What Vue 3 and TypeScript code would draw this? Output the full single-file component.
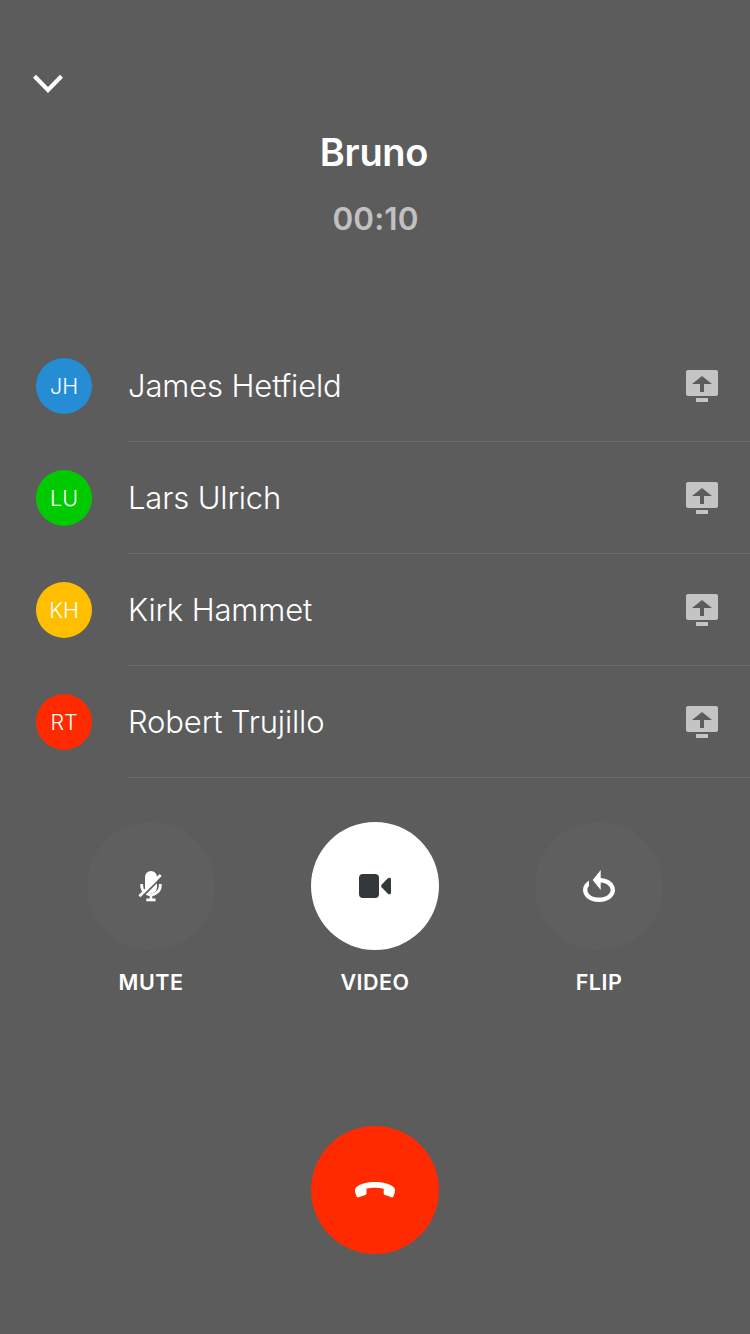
<script setup lang="ts">
interface Participant {
  name: string
  initials: string
  tone: string
}

const participants: Participant[] = [
  { name: 'James Hetfield', initials: 'JH', tone: 'blue' },
  { name: 'Lars Ulrich', initials: 'LU', tone: 'green' },
  { name: 'Kirk Hammet', initials: 'KH', tone: 'yellow' },
  { name: 'Robert Trujillo', initials: 'RT', tone: 'red' },
]
</script>

<template>
  <main class="call">
    <button class="collapse" aria-label="Minimize">
      <svg width="32" height="24" viewBox="0 0 32 24">
        <path d="M2.500 4.300 16 17.900 29.500 4.300" fill="none" stroke="#fff" stroke-width="4.200" />
      </svg>
    </button>
    <h1 class="title">Bruno</h1>
    <p class="timer">00:10</p>

    <ul class="people">
      <li v-for="p in participants" :key="p.initials" class="person">
        <span class="avatar" :class="p.tone">{{ p.initials }}</span>
        <div class="details">
          <span class="name">{{ p.name }}</span>
          <svg class="share" width="32" height="32" viewBox="0 0 32 32">
            <path
              fill="#c4c4c4"
              fill-rule="evenodd"
              d="M2 0H30Q32 0 32 2V24Q32 26 30 26H2Q0 26 0 24V2Q0 0 2 0ZM16 6 6 14H14V22H18V14H26ZM10 28H22V32H10Z"
            />
          </svg>
        </div>
      </li>
    </ul>

    <section class="controls">
      <div class="control">
        <button class="round" aria-label="Mute">
          <svg width="128" height="128" viewBox="0 0 128 128">
            <rect x="58" y="49" width="12" height="22.500" rx="6" fill="#fff" />
            <path d="M54.700 62v1.500a9.300 9.300 0 0 0 18.600 0V62" fill="none" stroke="#fff" stroke-width="2.800" />
            <path d="M64 72v5" fill="none" stroke="#fff" stroke-width="2.600" />
            <path d="M59.300 77.900h9.200" fill="none" stroke="#fff" stroke-width="2.800" />
            <path d="M53.800 76 75.200 54.800" stroke="#5f5f5f" stroke-width="1.800" />
            <path d="M52.400 74.300 73.700 53" stroke="#fff" stroke-width="2.800" />
          </svg>
        </button>
        <span class="label">MUTE</span>
      </div>
      <div class="control">
        <button class="round active" aria-label="Video">
          <svg width="128" height="128" viewBox="0 0 128 128">
            <rect x="48" y="52" width="20" height="24" rx="4" fill="#33383b" />
            <path d="M70.600 62.700 76.600 56.600Q78 55.300 79.200 55.800 80 56.200 80 57.500V70.500Q80 71.800 79.200 72.200 78 72.700 76.600 71.400L70.600 65.300Q69.400 64 70.600 62.700Z" fill="#33383b" />
          </svg>
        </button>
        <span class="label">VIDEO</span>
      </div>
      <div class="control">
        <button class="round" aria-label="Flip">
          <svg width="128" height="128" viewBox="0 0 128 128">
            <path d="M54 58.500V64C52.800 65.200 52.400 66.500 52.400 67.900C52.400 72.300 57.500 75.600 64 75.600S75.600 72.300 75.600 67.900C75.600 64 71.500 60.900 65.700 60.400V68L57.700 58 65.700 48V56.100C74 56.700 80 61.600 80 67.900C80 74.800 72.800 80 64 80S48 74.800 48 67.900C48 64 50.300 60.800 54 58.500Z" fill="#fff" />
          </svg>
        </button>
        <span class="label">FLIP</span>
      </div>
    </section>

    <button class="hangup" aria-label="End call">
      <svg width="128" height="128" viewBox="0 0 128 128">
        <path d="M44.300 66.800C43.700 64.700 43.800 62.500 45.200 61.200C49.500 57.500 56.500 56 64 56S78.500 57.500 82.800 61.200C84.200 62.500 84.300 64.700 83.700 66.800L82.500 70.300C82.100 71.500 81.400 71.700 80.300 71.300L74 68.900C73 68.500 72.700 68.100 72.700 67.200V62.800C67.500 61.500 60.500 61.500 55.500 62.800V67.200C55.500 68.100 55.200 68.500 54.200 68.900L47.700 71.300C46.600 71.700 45.900 71.500 45.500 70.300Z" fill="#fff" />
      </svg>
    </button>
  </main>
</template>

<style>
body {
  margin: 0;
  background: #5c5c5c;
}
</style>

<style scoped>
.call {
  box-sizing: border-box;
  display: flex;
  flex-direction: column;
  width: 750px;
  height: 1334px;
  padding-top: 72px;
  overflow: hidden;
  background: #5c5c5c;
  color: #fff;
  font-family: Inter, "Liberation Sans", sans-serif;
}
button {
  display: block;
  padding: 0;
  border: 0;
  background: none;
}
svg {
  display: block;
}
.collapse {
  width: 32px;
  height: 24px;
  margin-left: 32px;
}
.title {
  margin: 31px 0 0;
  padding-right: 2px;
  text-align: center;
  font-size: 38px;
  font-weight: 600;
  letter-spacing: -0.3px;
  line-height: 50px;
}
.timer {
  margin: 21px 0 0;
  padding-left: 1px;
  color: #c1c1c1;
  text-align: center;
  font-size: 31.5px;
  font-weight: 600;
  letter-spacing: 0.1px;
  line-height: 42px;
}
.people {
  margin: 90px 0 0;
  padding: 0;
  list-style: none;
}
.person {
  display: flex;
  align-items: center;
  height: 112px;
  padding-left: 36px;
}
.avatar {
  flex: none;
  width: 56px;
  height: 56px;
  margin-right: 36px;
  border-radius: 50%;
  text-align: center;
  font-size: 21.5px;
  font-weight: 300;
  letter-spacing: -0.1px;
  line-height: 57px;
}
.blue {
  background: #258dd4;
}
.green {
  background: #00cb00;
}
.yellow {
  background: #ffbf00;
}
.red {
  background: #ff2a00;
}
.details {
  box-sizing: border-box;
  display: flex;
  flex: 1;
  align-items: center;
  justify-content: space-between;
  height: 112px;
  padding-right: 32px;
  border-bottom: 1px solid #6c6c6c;
}
.name {
  font-size: 31px;
  font-weight: 300;
  letter-spacing: -0.14px;
  line-height: 40px;
}
.controls {
  display: flex;
  justify-content: space-between;
  margin: 44px 87px 0;
}
.control {
  width: 128px;
}
.round,
.hangup {
  width: 128px;
  height: 128px;
  border-radius: 50%;
}
.round {
  background: #5f5f5f;
}
.round.active {
  background: #fff;
}
.label {
  display: block;
  margin-top: 17px;
  text-align: center;
  font-size: 21.5px;
  font-weight: 600;
  letter-spacing: 0.5px;
  line-height: 30px;
}
.hangup {
  margin: 129px 0 0 311px;
  background: #ff2a00;
}
</style>
